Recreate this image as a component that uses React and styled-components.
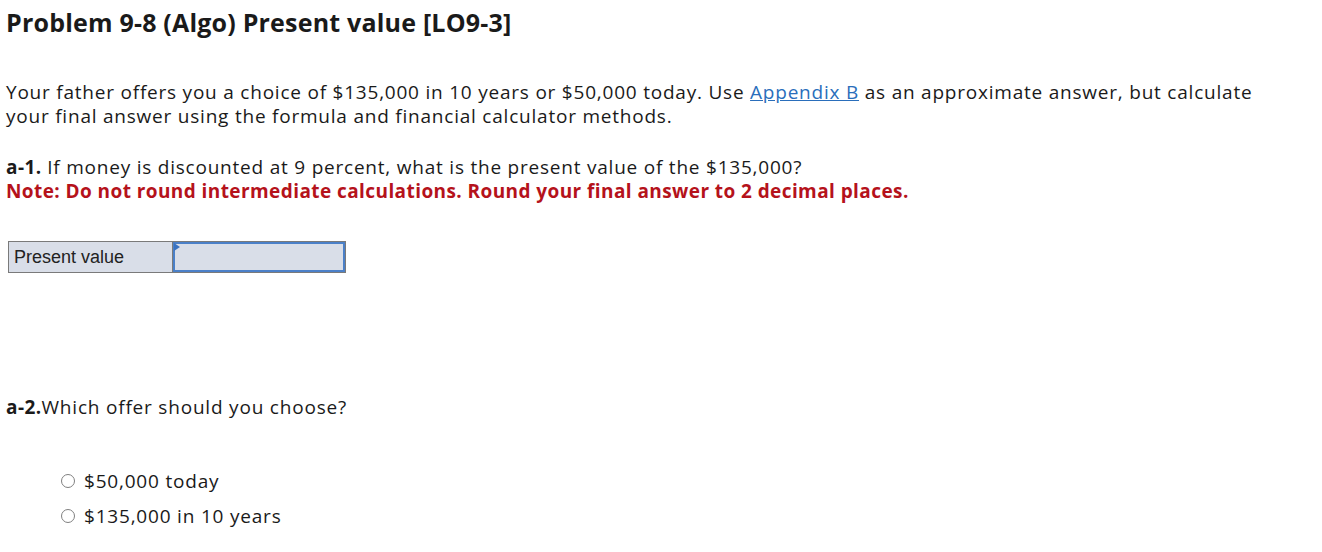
import React from "react";
import styled, { createGlobalStyle } from "styled-components";

const Global = createGlobalStyle`
  html, body { margin: 0; padding: 0; background: #fff; }
  body { font-family: "Open Sans", Lato, sans-serif; color: #1a1a1a; }
`;

const Page = styled.div`
  padding: 6px 6px 0 6px;
  width: 1310px;
`;

const Title = styled.h1`
  margin: 0;
  font-size: 25px;
  font-weight: 700;
  letter-spacing: 0.2px;
  line-height: 32px;
  color: #1a1a1a;
`;

const Para = styled.p`
  margin: ${(p) => p.$mt || 0}px 0 0 0;
  font-size: 19px;
  letter-spacing: 0.78px;
  line-height: 24px;
`;

const Link = styled.a`
  color: #2a6ebb;
  text-decoration: underline;
`;

const Bold = styled.b`
  font-weight: 700;
  letter-spacing: 0.4px;
`;

const Note = styled.div`
  font-size: 19px;
  line-height: 24px;
  font-weight: 700;
  letter-spacing: 0.42px;
  color: #b5121b;
`;

const Table = styled.div`
  display: flex;
  margin: 38px 0 0 2px;
  width: 338px;
  height: 32px;
`;

const LabelCell = styled.div`
  width: 164px;
  box-sizing: border-box;
  border: 1px solid #7a7a7a;
  border-right: none;
  background: #d9dee8;
  font-family: "Liberation Sans", Arial, sans-serif;
  font-size: 18px;
  display: flex;
  align-items: center;
  padding-left: 5px;
  color: #222;
`;

const InputCell = styled.div`
  position: relative;
  width: 174px;
  box-sizing: border-box;
  border: 1px solid #7a7a7a;
  background: #d9dee8;
`;

const InputBox = styled.div`
  height: 100%;
  box-sizing: border-box;
  border: 2px solid #4b80c8;
`;

const Marker = styled.span`
  position: absolute;
  left: 1px;
  top: 1px;
  width: 0;
  height: 0;
  border-top: 4px solid transparent;
  border-bottom: 4px solid transparent;
  border-left: 6px solid #3a72c0;
`;

const Question = styled.div`
  margin-top: 122px;
  font-size: 19px;
  letter-spacing: 0.8px;
  line-height: 24px;
`;

const Options = styled.div`
  margin-top: 50px;
  padding-left: 55px;
  display: flex;
  flex-direction: column;
  gap: 11px;
`;

const Option = styled.label`
  display: flex;
  align-items: center;
  gap: 9px;
  font-size: 19px;
  letter-spacing: 0.8px;
  line-height: 24px;
`;

const Radio = styled.span`
  width: 14px;
  height: 14px;
  box-sizing: border-box;
  border-radius: 50%;
  border: 1px solid #808080;
  background: #fff;
  flex: none;
`;

export default function App() {
  return (
    <>
      <Global />
      <Page>
        <Title>Problem 9-8 (Algo) Present value [LO9-3]</Title>
        <Para $mt={42}>
          Your father offers you a choice of $135,000 in 10 years or $50,000 today. Use{" "}
          <Link href="#">Appendix B</Link> as an approximate answer, but calculate
          <br />
          your final answer using the formula and financial calculator methods.
        </Para>
        <Para $mt={27}>
          <Bold>a-1.</Bold> If money is discounted at 9 percent, what is the present value of the
          $135,000?
        </Para>
        <Note>
          Note: Do not round intermediate calculations. Round your final answer to 2 decimal
          places.
        </Note>
        <Table>
          <LabelCell>Present value</LabelCell>
          <InputCell>
            <InputBox />
            <Marker />
          </InputCell>
        </Table>
        <Question>
          <Bold>a-2.</Bold>Which offer should you choose?
        </Question>
        <Options>
          <Option>
            <Radio />
            $50,000 today
          </Option>
          <Option>
            <Radio />
            $135,000 in 10 years
          </Option>
        </Options>
      </Page>
    </>
  );
}
